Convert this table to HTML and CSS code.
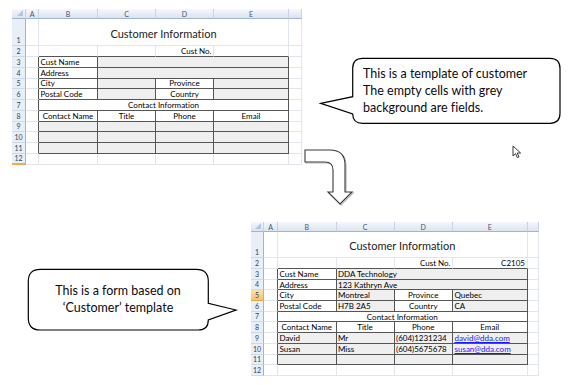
FILE: index.html
```html
<!DOCTYPE html>
<html lang="en">
<head>
    <meta charset="UTF-8">
    <title>Customer Template</title>
    <link rel="stylesheet" href="styles.css">
</head>
<body>
    <div class="canvas">
        <!-- template sheet -->
        <div class="sheet sheet-top">
            <div class="hd corner"></div><div class="hd">A</div><div class="hd">B</div><div class="hd">C</div><div class="hd">D</div><div class="hd">E</div><div class="hd"></div>

            <div class="rh">1</div><div class="c"></div><div class="c title span4">Customer Information</div><div class="c"></div>
            <div class="rh">2</div><div class="c"></div><div class="c top"></div><div class="c top"></div><div class="c top end">Cust No.</div><div class="c top"></div><div class="c"></div>
            <div class="rh">3</div><div class="c lead"></div><div class="c t">Cust Name</div><div class="c t f span3"></div><div class="c"></div>
            <div class="rh">4</div><div class="c lead"></div><div class="c t">Address</div><div class="c t f span3"></div><div class="c"></div>
            <div class="rh">5</div><div class="c lead"></div><div class="c t">City</div><div class="c t f"></div><div class="c t mid">Province</div><div class="c t f"></div><div class="c"></div>
            <div class="rh">6</div><div class="c lead"></div><div class="c t">Postal Code</div><div class="c t f"></div><div class="c t mid">Country</div><div class="c t f"></div><div class="c"></div>
            <div class="rh">7</div><div class="c lead"></div><div class="c t mid span4">Contact Information</div><div class="c"></div>
            <div class="rh">8</div><div class="c lead"></div><div class="c t mid">Contact Name</div><div class="c t mid">Title</div><div class="c t mid">Phone</div><div class="c t mid">Email</div><div class="c"></div>
            <div class="rh">9</div><div class="c lead"></div><div class="c t f"></div><div class="c t f"></div><div class="c t f"></div><div class="c t f"></div><div class="c"></div>
            <div class="rh">10</div><div class="c lead"></div><div class="c t f"></div><div class="c t f"></div><div class="c t f"></div><div class="c t f"></div><div class="c"></div>
            <div class="rh">11</div><div class="c lead"></div><div class="c t f"></div><div class="c t f"></div><div class="c t f"></div><div class="c t f"></div><div class="c"></div>
            <div class="rh marked">12</div><div class="c"></div><div class="c"></div><div class="c"></div><div class="c"></div><div class="c"></div><div class="c"></div>
        </div>

        <!-- filled form sheet -->
        <div class="sheet sheet-bottom">
            <div class="hd corner"></div><div class="hd">A</div><div class="hd">B</div><div class="hd">C</div><div class="hd">D</div><div class="hd">E</div><div class="hd"></div>

            <div class="rh">1</div><div class="c"></div><div class="c title span4">Customer Information</div><div class="c"></div>
            <div class="rh">2</div><div class="c"></div><div class="c top"></div><div class="c top"></div><div class="c top end">Cust No.</div><div class="c top end">C2105</div><div class="c"></div>
            <div class="rh">3</div><div class="c lead"></div><div class="c t">Cust Name</div><div class="c t f span3">DDA Technology</div><div class="c"></div>
            <div class="rh">4</div><div class="c lead"></div><div class="c t">Address</div><div class="c t f span3">123 Kathryn Ave</div><div class="c"></div>
            <div class="rh selected">5</div><div class="c lead"></div><div class="c t">City</div><div class="c t f">Montreal</div><div class="c t mid">Province</div><div class="c t f">Quebec</div><div class="c"></div>
            <div class="rh">6</div><div class="c lead"></div><div class="c t">Postal Code</div><div class="c t f">H7B 2A5</div><div class="c t mid">Country</div><div class="c t f">CA</div><div class="c"></div>
            <div class="rh">7</div><div class="c lead"></div><div class="c t mid span4">Contact Information</div><div class="c"></div>
            <div class="rh">8</div><div class="c lead"></div><div class="c t mid">Contact Name</div><div class="c t mid">Title</div><div class="c t mid">Phone</div><div class="c t mid">Email</div><div class="c"></div>
            <div class="rh">9</div><div class="c lead"></div><div class="c t f">David</div><div class="c t f">Mr</div><div class="c t f">(604)1231234</div><div class="c t f"><a class="mail" href="#">david@dda.com</a></div><div class="c"></div>
            <div class="rh">10</div><div class="c lead"></div><div class="c t f">Susan</div><div class="c t f">Miss</div><div class="c t f">(604)5675678</div><div class="c t f"><a class="mail" href="#">susan@dda.com</a></div><div class="c"></div>
            <div class="rh">11</div><div class="c lead"></div><div class="c t f"></div><div class="c t f"></div><div class="c t f"></div><div class="c t f"></div><div class="c"></div>
            <div class="rh">12</div><div class="c"></div><div class="c"></div><div class="c"></div><div class="c"></div><div class="c"></div><div class="c"></div>
        </div>

        <div class="callout callout-template">
            <svg width="245" height="70" viewBox="0 0 245 70">
                <path d="M44.7 2.3 H232 Q242 2.3 242 12.3 V57.3 Q242 67.3 232 67.3 H44.7 Q34.7 67.3 34.7 58 L2.7 47.3 L34.7 40.7 V12.3 Q34.7 2.3 44.7 2.3 Z" fill="#fff" stroke="#000" stroke-width="1.2"/>
            </svg>
            <p>This is a template of customer<br>The empty cells with grey<br>background are fields.</p>
        </div>

        <div class="callout callout-form">
            <svg width="213" height="66" viewBox="0 0 213 66">
                <path d="M14.3 2.3 H170.3 Q182.3 2.3 182.3 14.3 V36.3 L210 43 L182.3 53 Q182.3 63 172.3 63 H14.3 Q2.3 63 2.3 51 V14.3 Q2.3 2.3 14.3 2.3 Z" fill="#fff" stroke="#000" stroke-width="1.2"/>
            </svg>
            <p>This is a form based on<br>&lsquo;Customer&rsquo; template</p>
        </div>

        <svg class="turn-arrow" width="569" height="385" viewBox="0 0 569 385">
            <path d="M306 151 H331 Q346 151 346 166 V193 H353 L341 205 L329 193 H334 V171 Q334 163 326 163 H306 Z" fill="none" stroke="#b5b5b5" stroke-width="1.2"/>
            <path d="M305 150 H330 Q345 150 345 165 V192 H352 L340 204 L328 192 H333 V170 Q333 162 325 162 H305 Z" fill="#fff" stroke="#3a3a3a" stroke-width="1.1"/>
        </svg>

        <svg class="pointer" width="12" height="14" viewBox="0 0 12 14">
            <path d="M1 1 V11 L3.5 8.6 L5.4 12.6 L7 11.9 L5.2 8 H8.6 Z" fill="#fff" stroke="#222" stroke-width="0.9" stroke-linejoin="round"/>
        </svg>
    </div>
</body>
</html>
```

FILE: styles.css
```css
body {
    margin: 0;
    background: #fff;
}
.canvas {
    position: relative;
    width: 569px;
    height: 385px;
    overflow: hidden;
    font-family: 'Lato', 'Liberation Sans', sans-serif;
    font-variant-ligatures: none;
}
.sheet {
    position: absolute;
    display: grid;
    grid-template-columns: 14px 13px 59px 58px 58px 75px 13px;
    grid-template-rows: 10px 27px 11px repeat(10, 10.75px);
    font-size: 8px;
    color: #000;
    background: #fff;
}
.sheet-top {
    left: 12px;
    top: 9px;
}
.sheet-bottom {
    left: 251px;
    top: 222px;
    grid-template-columns: 13px 14px 58.5px 58px 58.5px 74.5px 11px;
    grid-template-rows: 10px 26px 11px repeat(10, 10.7px);
}
.sheet > div {
    box-sizing: border-box;
    display: flex;
    align-items: center;
    white-space: nowrap;
    overflow: hidden;
}
.hd {
    background: linear-gradient(#f5f8fc, #dbe4f0);
    border-right: 1px solid #c7d3e3;
    border-bottom: 1px solid #9fb5cd;
    color: #3b567a;
    font-size: 7px;
    justify-content: center;
}
.corner {
    position: relative;
}
.corner::after {
    content: '';
    position: absolute;
    right: 2px;
    bottom: 2px;
    border-left: 6px solid transparent;
    border-bottom: 6px solid #b5c6dc;
}
.rh {
    background: #e9eff7;
    border-right: 1px solid #9fb5cd;
    border-bottom: 1px solid #ced9e8;
    color: #2e4566;
    font-size: 7px;
    justify-content: center;
    align-items: flex-end !important;
    padding-bottom: 1px;
}
.rh.selected {
    background: linear-gradient(#fbe2b0, #f4c36c);
    border-bottom-color: #e8a745;
}
.rh.marked {
    border-bottom: 2px solid #f2a94a;
}
.c {
    border-right: 1px solid #e1e6ee;
    border-bottom: 1px solid #e1e6ee;
    padding: 0 1.5px;
}
.c.t {
    border-right-color: #555;
    border-bottom-color: #555;
}
.c.f {
    background: #efefef;
}
.c.lead {
    border-right-color: #555;
}
.c.top {
    border-bottom-color: #555;
}
.mid {
    justify-content: center;
}
.end {
    justify-content: flex-end;
}
.span3 {
    grid-column: span 3;
}
.span4 {
    grid-column: span 4;
}
.title {
    justify-content: center;
    font-size: 11px;
    color: #222;
    padding-top: 2px;
}
.mail {
    color: #1a1aff;
    text-decoration: underline;
}
.callout {
    position: absolute;
}
.callout svg {
    position: absolute;
    left: 0;
    top: 0;
}
.callout p {
    position: relative;
    margin: 0;
    font-size: 12.5px;
    line-height: 17px;
    color: #0a0a14;
}
.callout-template {
    left: 318px;
    top: 56px;
    width: 245px;
    height: 70px;
}
.callout-template p {
    padding: 9px 0 0 45px;
}
.callout-form {
    left: 26px;
    top: 267px;
    width: 213px;
    height: 66px;
}
.callout-form p {
    width: 180px;
    margin-left: 2px;
    padding-top: 16px;
    text-align: center;
    line-height: 16.6px;
}
.turn-arrow {
    position: absolute;
    left: 0;
    top: 0;
    pointer-events: none;
}
.pointer {
    position: absolute;
    left: 512px;
    top: 145px;
}
```
